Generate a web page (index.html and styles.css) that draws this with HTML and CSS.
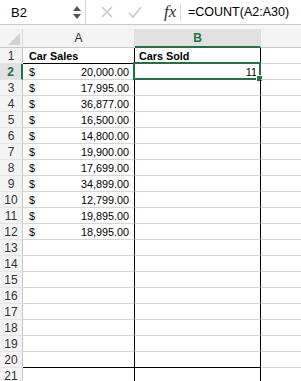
FILE: index.html
```html
<!DOCTYPE html>
<html lang="en">
<head>
	<meta charset="UTF-8">
	<title>Car Sales</title>
	<link rel="stylesheet" href="styles.css">
</head>
<body>
<div class="toolbar">
	<div class="namebox">
		<span class="ref">B2</span>
		<span class="stepper"><span class="up"></span><span class="down"></span></span>
	</div>
	<div class="actions">
		<svg class="icon" width="14" height="14" viewBox="0 0 14 14"><path d="M2 2 L12 12 M12 2 L2 12" stroke="#c8c8c8" stroke-width="1.6" fill="none"/></svg>
		<svg class="icon" width="16" height="14" viewBox="0 0 16 14"><path d="M2 8 L6 12 L14 2" stroke="#c8c8c8" stroke-width="1.6" fill="none"/></svg>
		<span class="fx">fx</span>
	</div>
	<div class="formula">=COUNT(A2:A30)</div>
</div>
<div class="strip"></div>
<div class="sheet" id="sheet">
	<div class="corner"></div>
	<div class="colhead">A</div>
	<div class="colhead active">B</div>
	<div class="colhead last"></div>
</div>
<script>
	// A column values, rows 2..12
	const sales = ['20,000.00', '17,995.00', '36,877.00', '16,500.00', '14,800.00', '19,900.00',
		'17,699.00', '34,899.00', '12,799.00', '19,895.00', '18,995.00'];
	const sheet = document.getElementById('sheet');

	function cell(cls, html) {
		const div = document.createElement('DIV');
		div.className = cls;
		if(html) div.innerHTML = html;
		sheet.appendChild(div);
		return div;
	}

	for(let r = 1; r <= 21; r++) {
		const edge = r == 1 ? ' head' : (r == 20 ? ' bottom' : '');
		cell('rowhead' + (r == 2 ? ' active' : ''), r);
		if(r == 1) {
			cell('cell a' + edge, '<b>Car Sales</b>');
			cell('cell b' + edge, '<b>Cars Sold</b>');
		} else {
			const v = sales[r - 2];
			cell('cell a' + edge, v ? '<span>$</span><span>' + v + '</span>' : '');
			const b = cell('cell b' + edge, r == 2 ? '<span></span><span>11</span>' : '');
			if(r == 2) {
				const sel = document.createElement('DIV');
				sel.className = 'selection';
				sel.innerHTML = '<div class="handle"></div>';
				b.appendChild(sel);
			}
		}
		cell('cell c');
	}
</script>
</body>
</html>
```
FILE: styles.css
```css
body {
	margin:0;
	font-family: "Liberation Sans", Arial, sans-serif;
	color:#000;
	background:#fff;
	overflow:hidden;
}

.toolbar {
	display:flex;
	align-items:center;
	height:25px;
	border-bottom:1px solid #c8c8c8;
	box-sizing: border-box;
}
.namebox {
	display:flex;
	align-items:center;
	justify-content: space-between;
	width:86px;
	height:100%;
	padding:0 4px 0 11px;
	box-sizing: border-box;
	border-right:1px solid #d6d6d6;
}
.ref {
	font-size:13px;
}
.stepper {
	display:flex;
	flex-direction: column;
	gap:3px;
}
.stepper .up, .stepper .down {
	width:0;
	height:0;
	border-left:4px solid transparent;
	border-right:4px solid transparent;
}
.stepper .up {
	border-bottom:5px solid #555;
}
.stepper .down {
	border-top:5px solid #555;
}
.actions {
	display:flex;
	align-items:center;
	gap:13px;
	padding-left:14px;
	width:95px;
	height:17px;
	box-sizing: border-box;
	border-right:1px solid #d6d6d6;
}
.fx {
	font-family: "Liberation Serif", serif;
	font-style: italic;
	font-size:17px;
	color:#333;
	margin-left:8px;
}
.formula {
	padding-left:7px;
	font-size:12.5px;
}

.strip {
	height:4px;
	background:#f6f6f6;
}

.sheet {
	display:grid;
	grid-template-columns: 23px 112px 126px 1fr;
	grid-auto-rows: 16px;
	grid-template-rows: 19px;
	font-size:10.8px;
}
.corner {
	position:relative;
	background:#f3f3f3;
	border-right:1px solid #dcdcdc;
	border-bottom:1px solid #c8c8c8;
}
.corner::after {
	content:'';
	position:absolute;
	right:2px;
	bottom:2px;
	border-left:12px solid transparent;
	border-bottom:12px solid #d3d3d3;
}
.colhead {
	display:flex;
	align-items:center;
	justify-content: center;
	background:#f3f3f3;
	border-right:1px solid #dcdcdc;
	border-bottom:1px solid #c8c8c8;
	color:#333;
	font-size:12px;
}
.colhead.active {
	background:#e1e1e1;
	color:#217346;
	font-weight:bold;
	border-bottom:2px solid #217346;
}
.colhead.last {
	border-right:none;
}

.rowhead {
	display:flex;
	align-items:center;
	justify-content: center;
	background:#f3f3f3;
	border-right:1px solid #c8c8c8;
	border-bottom:1px solid #e4e4e4;
	color:#333;
	font-size:12px;
}
.rowhead.active {
	background:#e1e1e1;
	color:#217346;
	font-weight:bold;
	border-right:2px solid #217346;
}

.cell {
	position:relative;
	display:flex;
	align-items:center;
	justify-content: space-between;
	padding:0 5px 0 6px;
	box-sizing: border-box;
	border-right:1px solid #d4d4d4;
	border-bottom:1px solid #d4d4d4;
	white-space: nowrap;
}
.cell.a, .cell.b {
	border-right-color:#000;
}
.cell.b {
	padding:0 3px 0 4px;
}
.cell.head, .cell.bottom {
	border-bottom-color:#000;
}
.cell.c {
	border-right:none;
}

.selection {
	position:absolute;
	top:-2px;
	left:-2px;
	right:-1px;
	bottom:-1px;
	border:2px solid #217346;
}
.handle {
	position:absolute;
	right:-4px;
	bottom:-4px;
	width:5px;
	height:5px;
	background:#217346;
	border:1px solid #fff;
}
```
